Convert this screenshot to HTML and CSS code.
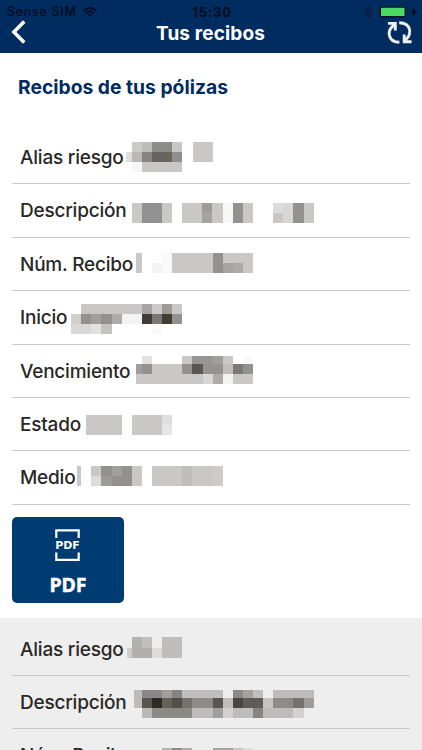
FILE: index.html
```html
<!DOCTYPE html>
<html lang="es">
<head>
  <meta charset="UTF-8">
  <meta name="viewport" content="width=device-width, initial-scale=1.0">
  <title>Tus recibos</title>
  <link rel="stylesheet" href="styles.css">
</head>
<body>
  <header class="header">
    <div class="status">
      <div class="carrier">
        <span>Sense SIM</span>
        <svg class="wifi" viewBox="0 0 14 10" fill="none" stroke="#020b1c" stroke-width="1.7">
          <path d="M0.7 3.5Q7 -1.5 13.3 3.5M3.1 6Q7 2.8 10.9 6" />
          <path d="M4.9 7.6Q7 6 9.1 7.6L7 10z" fill="#020b1c" stroke="none" />
        </svg>
      </div>
      <span class="time">15:30</span>
      <svg class="battery" viewBox="0 0 54 16">
        <path d="M1.5 4.5L8 11L4.7 14V2L8 5L1.5 11" fill="none" stroke="#0a1c3b" stroke-width="1.2" />
        <rect x="16.5" y="2.5" width="26.5" height="11" rx="2.2" fill="#03152e" />
        <rect x="18" y="3.7" width="23.5" height="8.3" rx="0.6" fill="#4cd964" />
        <path d="M43.8 6q1.6 2 0 4z" fill="#03152e" />
        <path d="M51.8 3L48 8.6h2.5l-1 4.2L54 7h-2.7z" fill="#020b1c" />
      </svg>
    </div>
    <div class="nav">
      <svg class="back" viewBox="0 0 16 26" fill="none" stroke="#fff" stroke-width="3.6">
        <path d="M14.2 1.4L3.9 12L14.2 22.6" />
      </svg>
      <h1 class="nav-title">Tus recibos</h1>
      <svg class="refresh" viewBox="0 0 26 24" fill="none" stroke="#eef0f3" stroke-width="2.9">
        <path d="M12.4 21.3C0.6 21 -0.6 9.5 7.2 4M1 2.4H8.3V9.4" />
        <path d="M12.2 1.7C24.4 2 25.6 13.5 17.8 19.4M24.6 20.7H17.2V13.6" />
      </svg>
    </div>
  </header>

  <main>
    <section class="receipt">
      <h2 class="heading">Recibos de tus pólizas</h2>
      <div class="row"><span class="label">Alias riesgo</span><svg class="mosaic"></svg></div>
      <div class="row"><span class="label">Descripción</span><svg class="mosaic"></svg></div>
      <div class="row"><span class="label">Núm. Recibo</span><svg class="mosaic"></svg></div>
      <div class="row"><span class="label">Inicio</span><svg class="mosaic"></svg></div>
      <div class="row"><span class="label">Vencimiento</span><svg class="mosaic"></svg></div>
      <div class="row"><span class="label">Estado</span><svg class="mosaic"></svg></div>
      <div class="row"><span class="label">Medio</span><svg class="mosaic"></svg></div>
      <button class="pdf">
        <svg class="pdf-icon" viewBox="0 0 26 33">
          <path d="M1.3 9V1.4H23.7V9M1.3 23.5V30.8H23.7V23.5" fill="none" stroke="#fff" stroke-width="2.2" />
          <text x="12.5" y="20.3" text-anchor="middle" class="pdf-mark">PDF</text>
        </svg>
        <span>PDF</span>
      </button>
    </section>
    <section class="receipt alt">
      <div class="row"><span class="label">Alias riesgo</span><svg class="mosaic"></svg></div>
      <div class="row"><span class="label">Descripción</span><svg class="mosaic"></svg></div>
      <div class="row"><span class="label">Núm. Recibo</span><svg class="mosaic"></svg></div>
    </section>
  </main>

  <script>
    // every strip: y, height, then [x, width, colour] blocks
    const mosaics = [
      [
        [142, 10, [132, 10, "#cbcbca"], [142, 10, "#bdbcbb"], [152, 20, "#8d8c8b"], [172, 10, "#c8c7c6"], [193, 20, "#c9c8c7"]],
        [152, 10, [126, 6, "#dfdede"], [132, 10, "#bab9b7"], [142, 10, "#868583"], [152, 20, "#66645d"], [172, 10, "#908f8d"], [193, 20, "#c9c8c7"]],
        [162, 10, [132, 10, "#f7f7f7"], [142, 40, "#c8c7c6"]]
      ],
      [
        [203, 10, [132, 10, "#c9c8c7"], [142, 20, "#929191"], [162, 10, "#c9c8c7"], [182, 20, "#c9c8c7"], [202, 10, "#9c9b9a"], [212, 11, "#c9c8c7"], [223, 10, "#f8f7f8"], [233, 10, "#929190"], [243, 10, "#c9c8c7"], [273, 10, "#dddcdc"], [283, 10, "#d8d7d7"], [293, 11, "#929190"], [304, 10, "#c9c8c7"]],
        [213, 10, [132, 10, "#c9c8c7"], [142, 20, "#929191"], [162, 10, "#c9c8c7"], [182, 20, "#c9c8c7"], [202, 10, "#a5a4a3"], [212, 11, "#c9c8c7"], [223, 10, "#f8f7f8"], [233, 10, "#929190"], [243, 10, "#c9c8c7"], [273, 10, "#c9c8c7"], [283, 10, "#d8d7d7"], [293, 11, "#929190"], [304, 10, "#c9c8c7"]]
      ],
      [
        [253, 10, [136, 6, "#c9c8c8"], [162, 10, "#f9f9f9"], [172, 41, "#c9c8c7"], [213, 10, "#92918f"], [223, 30, "#c9c8c7"]],
        [263, 10, [136, 6, "#c9c8c8"], [152, 10, "#f3f3f3"], [162, 10, "#f9f9f9"], [172, 41, "#c9c8c7"], [213, 10, "#92918f"], [223, 10, "#a5a4a3"], [233, 10, "#acabaa"], [243, 10, "#c9c8c7"]]
      ],
      [
        [304, 10, [81, 61, "#c8c7c6"], [142, 10, "#a5a4a2"], [152, 10, "#cbcac9"], [162, 10, "#9c9b98"], [172, 10, "#c9c8c7"]],
        [314, 10, [71, 10, "#d0cfce"], [81, 10, "#929190"], [91, 10, "#a09f9d"], [101, 11, "#929190"], [112, 10, "#adacab"], [122, 20, "#f3f3f3"], [142, 10, "#403c36"], [152, 10, "#7a7875"], [162, 10, "#403c36"], [172, 10, "#92918f"]],
        [324, 10, [71, 20, "#d8d7d7"], [91, 10, "#e2e1e1"], [101, 11, "#c4c3c2"], [152, 10, "#f9f9f9"]]
      ],
      [
        [356, 8, [142, 10, "#e2e1e1"], [182, 10, "#c9c8c7"], [192, 21, "#979695"], [213, 10, "#a09f9e"], [223, 10, "#c9c8c7"], [243, 10, "#f9f9f9"]],
        [364, 10, [136, 6, "#a09f9e"], [142, 10, "#929190"], [152, 30, "#c9c8c7"], [182, 10, "#92918f"], [192, 11, "#5a5650"], [203, 20, "#959492"], [223, 10, "#c0bfbe"], [233, 10, "#7b7977"], [243, 10, "#92918f"]],
        [374, 10, [136, 67, "#c9c8c7"], [203, 10, "#d8d7d7"], [213, 10, "#adacab"], [223, 10, "#f4f3f3"], [233, 20, "#c9c8c7"]]
      ],
      [
        [415, 10, [86, 36, "#c9c8c7"], [132, 30, "#c9c8c7"], [162, 10, "#e0dfdf"]],
        [425, 10, [86, 36, "#c9c8c7"], [132, 30, "#c9c8c7"], [162, 10, "#e8e7e7"]]
      ],
      [
        [466, 10, [77, 4, "#c9c8c8"], [91, 10, "#c9c8c7"], [101, 11, "#929190"], [112, 10, "#a09f9e"], [122, 10, "#929190"], [132, 10, "#c9c8c7"], [152, 30, "#c9c8c7"], [182, 10, "#bfbebd"], [192, 21, "#c9c8c7"], [213, 10, "#cdcccb"]],
        [476, 10, [77, 4, "#c9c8c8"], [91, 10, "#dddcdc"], [101, 11, "#9c9b9a"], [112, 20, "#929190"], [132, 10, "#c9c8c7"], [152, 30, "#c9c8c7"], [182, 10, "#bfbebd"], [192, 21, "#c9c8c7"], [213, 10, "#cdcccb"]]
      ],
      [
        [637, 11, [132, 10, "#b3b2b1"], [142, 10, "#c0bfbe"], [162, 20, "#bfbebd"]],
        [648, 10, [127, 5, "#cfcecd"], [132, 20, "#b1b0af"], [152, 10, "#dddcdc"], [162, 20, "#bfbebd"]]
      ],
      [
        [690, 8, [134, 8, "#bdbcbb"], [142, 20, "#898886"], [162, 10, "#a09f9d"], [172, 10, "#868482"], [182, 41, "#c0bfbe"], [233, 10, "#8c8b89"], [243, 10, "#a3a2a0"], [253, 10, "#c0bfbe"], [273, 41, "#bdbcbb"]],
        [698, 10, [134, 8, "#bdbcbb"], [142, 10, "#5a554e"], [152, 10, "#2e2a23"], [162, 10, "#65605a"], [172, 10, "#544f48"], [182, 10, "#75726e"], [192, 21, "#8d8b88"], [213, 10, "#5a554f"], [223, 10, "#c0bfbe"], [233, 10, "#4a453f"], [243, 20, "#605b56"], [263, 10, "#c6c5c4"], [273, 20, "#8d8b88"], [293, 11, "#75726e"], [304, 10, "#9e9c9a"]],
        [708, 10, [142, 10, "#bab9b8"], [152, 40, "#8b8a87"], [192, 21, "#bdbcbb"], [213, 10, "#a09f9d"], [223, 10, "#d2d1d0"], [233, 20, "#bdbcbb"], [253, 10, "#868482"], [263, 30, "#bdbcbb"], [293, 11, "#d2d1d0"]]
      ],
      [
        [748, 8, [162, 10, "#b5b4b3"], [172, 10, "#8b8a88"], [182, 10, "#aeadac"], [213, 20, "#a5a4a2"], [233, 10, "#c8c7c6"], [243, 10, "#dddcdc"]]
      ]
    ];

    document.querySelectorAll(".mosaic").forEach((svg, i) => {
      const box = svg.getBoundingClientRect();
      svg.setAttribute("viewBox", `${box.left} ${box.top} ${box.width} ${box.height}`);
      for (const [y, height, ...blocks] of mosaics[i]) {
        for (const [x, width, fill] of blocks) {
          const rect = document.createElementNS("http://www.w3.org/2000/svg", "rect");
          const attrs = { x, y, width, height, fill };
          for (const name in attrs) rect.setAttribute(name, attrs[name]);
          svg.appendChild(rect);
        }
      }
    });
  </script>
</body>
</html>
```
FILE: styles.css
```css
* {
  box-sizing: border-box;
}
body {
  margin: 0;
  height: 750px;
  overflow: hidden;
  background-color: #fff;
  color: #292826;
  font-family: Inter, "Liberation Sans", sans-serif;
}
h1,
h2 {
  margin: 0;
}
.header {
  height: 53px;
  background-color: #002c5f;
}
.status {
  display: grid;
  grid-template-columns: 1fr auto 1fr;
  align-items: center;
  height: 20px;
  padding: 4px 5px 0 7px;
  color: #020b1c;
  font-size: 12.5px;
  line-height: 16px;
}
.carrier {
  display: flex;
  align-items: center;
  gap: 6px;
  font-weight: 500;
  letter-spacing: 0.7px;
}
.wifi {
  width: 14px;
  height: 10px;
}
.time {
  font-weight: 700;
  font-size: 13px;
  letter-spacing: 0.8px;
}
.battery {
  justify-self: end;
  width: 54px;
  height: 16px;
}
.nav {
  display: flex;
  align-items: center;
  justify-content: space-between;
  height: 26px;
  padding: 0 9px 0 10px;
}
.back {
  width: 16px;
  height: 26px;
}
.nav-title {
  margin-left: 8px;
  color: #fff;
  font-size: 19px;
  font-weight: 700;
  letter-spacing: 0.15px;
}
.refresh {
  width: 26px;
  height: 24px;
}
.receipt {
  padding: 0 12px;
}
.heading {
  height: 78px;
  padding: 22px 6px 0;
  color: #002c5f;
  font-size: 19.3px;
  line-height: 24px;
  font-weight: 700;
}
.row {
  display: grid;
  height: 53.4px;
  border-bottom: 1px solid #c8c8c8;
}
.label,
.mosaic {
  grid-area: 1 / 1;
}
.label {
  padding: 15px 8px 0;
  font-size: 19px;
  line-height: 24px;
  font-weight: 500;
  letter-spacing: -0.22px;
}
.mosaic {
  display: block;
  width: 100%;
  height: 100%;
  overflow: visible;
  shape-rendering: crispEdges;
}
.pdf {
  display: flex;
  flex-direction: column;
  align-items: center;
  width: 112px;
  height: 86px;
  margin: 12.4px 0 15px;
  padding: 12px 0 0;
  border: none;
  border-radius: 5px;
  background-color: #003b71;
  color: #fff;
  font-family: "Noto Sans", "Open Sans", sans-serif;
  font-size: 19.5px;
  font-weight: 700;
  line-height: 24px;
  -webkit-text-stroke: 0.4px #fff;
}
.pdf-icon {
  width: 26px;
  height: 33px;
  margin-bottom: 11px;
}
.pdf-mark {
  fill: #fff;
  font-family: "DejaVu Sans", sans-serif;
  font-size: 11px;
  font-weight: 700;
}
.alt {
  padding-top: 4.4px;
  background-color: #eee;
}
```
